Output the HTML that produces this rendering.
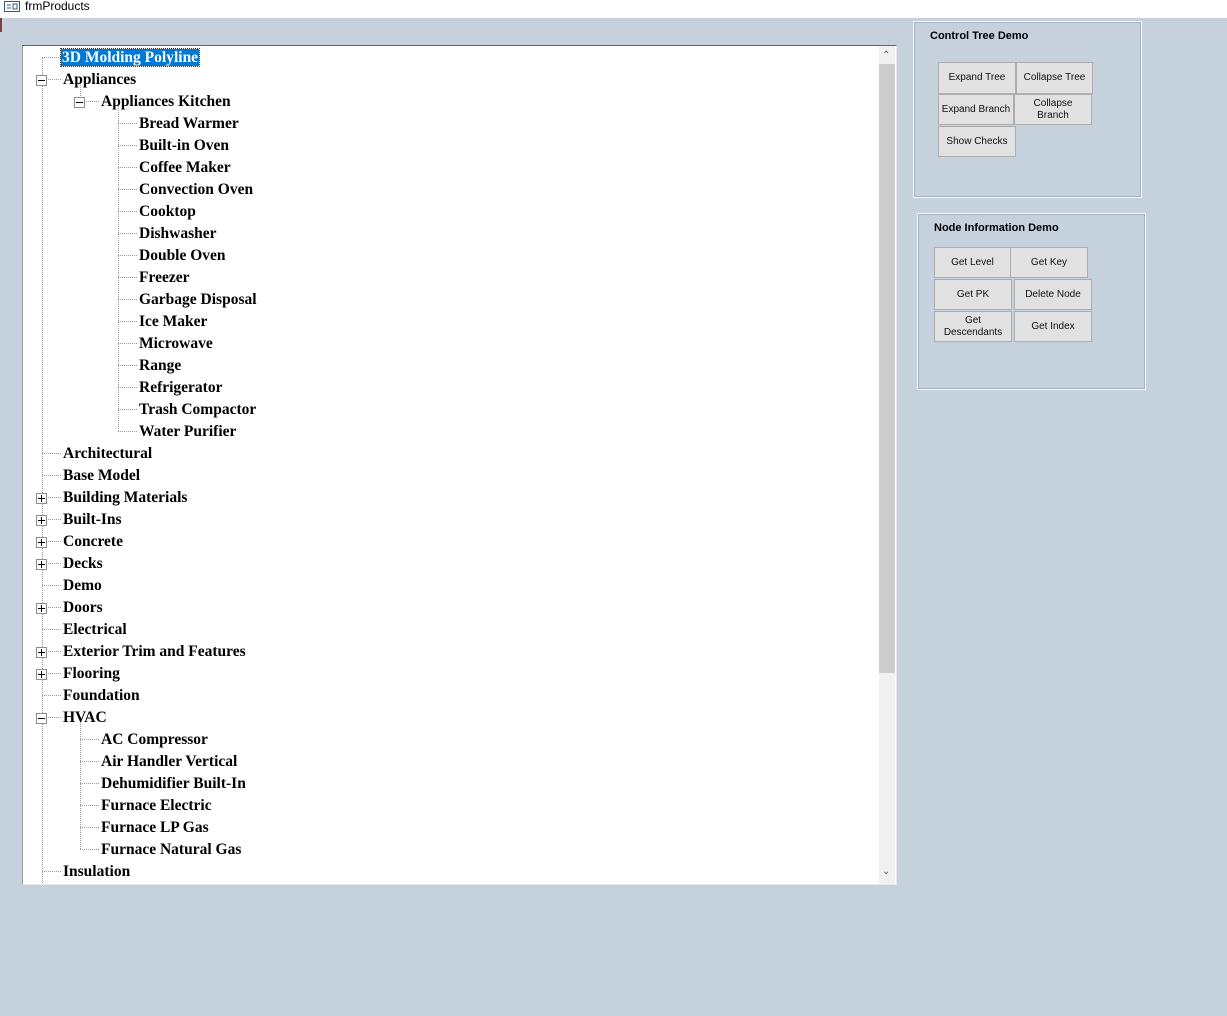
<!DOCTYPE html>
<html><head><meta charset="utf-8"><style>
body{margin:0;width:1227px;height:1016px;background:#c5d1dd;position:relative;overflow:hidden;font-family:"Liberation Sans",sans-serif}
.title{position:absolute;left:0;top:0;width:1227px;height:18px;background:#fff;font-size:12px;line-height:13px}
.title span{position:absolute;left:25px;top:0}
.tree{position:absolute;left:22px;top:45px;width:873px;height:838px;background:#fff;border-top:1px solid #646464;border-left:1px solid #a0a0a0;border-right:1px solid #e8e8e8;border-bottom:1px solid #e8e8e8;overflow:hidden}
.sb{position:absolute;left:879px;top:46px;width:16px;height:838px;background:#f0f0f0}
.th{position:absolute;left:879px;top:64px;width:16px;height:609px;background:#cdcdcd}
.r{position:absolute;height:22px;line-height:22px;font:bold 15.5px "Liberation Serif",serif;color:#000;white-space:nowrap;margin-top:2px}
.v{position:absolute;width:0;border-left:1px dotted #9a9a9a}
.h{position:absolute;height:0;border-top:1px dotted #9a9a9a}
.b{position:absolute;width:9px;height:9px;border:1px solid #8e8e8e;background:#fff}
.b:before{content:"";position:absolute;left:1px;top:4px;width:7px;height:1px;background:#000}
.p:after{content:"";position:absolute;left:4px;top:1px;width:1px;height:7px;background:#000}
.sel{background:#0078d7;color:#fff;padding:0 1px;outline:1px dotted #333}
.fr{position:absolute;border:1px solid #f4f6f8;box-shadow:inset 0 0 0 1px #a9b3bd}
.ft{position:absolute;font:bold 11px "Liberation Sans",sans-serif;color:#000}
.btn{position:absolute;background:#e1e1e1;border:1px solid #adadad;box-sizing:border-box;font:10px "Liberation Sans",sans-serif;display:flex;align-items:center;justify-content:center;text-align:center;line-height:12px;color:#111;white-space:nowrap}
</style></head><body>
<div style="position:absolute;left:0;top:18px;width:2px;height:14px;background:#8a3a3a"></div>
<div class="title"><svg style="position:absolute;left:4px;top:1px" width="16" height="11"><rect x="0.5" y="0.5" width="15" height="10" fill="#fff" stroke="#3a5a8a"/><line x1="3" y1="4" x2="7" y2="4" stroke="#3a5a8a"/><line x1="3" y1="7" x2="7" y2="7" stroke="#3a5a8a"/><rect x="9" y="3" width="4" height="5" fill="none" stroke="#3a5a8a"/></svg><span>frmProducts</span></div>
<div class="tree"></div>
<div class="sb"></div><div class="th"></div>
<div style="position:absolute;left:882px;top:50px;font-size:10px;color:#555">&#8963;</div>
<div style="position:absolute;left:882px;top:866px;font-size:10px;color:#555">&#8964;</div>

<div class="v" style="left:42px;top:57px;height:826px"></div>
<div class="v" style="left:80px;top:80px;height:22px"></div>
<div class="v" style="left:118px;top:102px;height:329px"></div>
<div class="v" style="left:80px;top:717px;height:132px"></div>

<div class="h" style="left:42px;top:57px;width:19px"></div>
<div class="h" style="left:42px;top:79px;width:19px"></div>
<div class="h" style="left:42px;top:453px;width:19px"></div>
<div class="h" style="left:42px;top:475px;width:19px"></div>
<div class="h" style="left:42px;top:497px;width:19px"></div>
<div class="h" style="left:42px;top:519px;width:19px"></div>
<div class="h" style="left:42px;top:541px;width:19px"></div>
<div class="h" style="left:42px;top:563px;width:19px"></div>
<div class="h" style="left:42px;top:585px;width:19px"></div>
<div class="h" style="left:42px;top:607px;width:19px"></div>
<div class="h" style="left:42px;top:629px;width:19px"></div>
<div class="h" style="left:42px;top:651px;width:19px"></div>
<div class="h" style="left:42px;top:673px;width:19px"></div>
<div class="h" style="left:42px;top:695px;width:19px"></div>
<div class="h" style="left:42px;top:717px;width:19px"></div>
<div class="h" style="left:42px;top:871px;width:19px"></div>
<div class="h" style="left:80px;top:101px;width:19px"></div>
<div class="h" style="left:80px;top:739px;width:19px"></div>
<div class="h" style="left:80px;top:761px;width:19px"></div>
<div class="h" style="left:80px;top:783px;width:19px"></div>
<div class="h" style="left:80px;top:805px;width:19px"></div>
<div class="h" style="left:80px;top:827px;width:19px"></div>
<div class="h" style="left:80px;top:849px;width:19px"></div>
<div class="h" style="left:118px;top:123px;width:19px"></div>
<div class="h" style="left:118px;top:145px;width:19px"></div>
<div class="h" style="left:118px;top:167px;width:19px"></div>
<div class="h" style="left:118px;top:189px;width:19px"></div>
<div class="h" style="left:118px;top:211px;width:19px"></div>
<div class="h" style="left:118px;top:233px;width:19px"></div>
<div class="h" style="left:118px;top:255px;width:19px"></div>
<div class="h" style="left:118px;top:277px;width:19px"></div>
<div class="h" style="left:118px;top:299px;width:19px"></div>
<div class="h" style="left:118px;top:321px;width:19px"></div>
<div class="h" style="left:118px;top:343px;width:19px"></div>
<div class="h" style="left:118px;top:365px;width:19px"></div>
<div class="h" style="left:118px;top:387px;width:19px"></div>
<div class="h" style="left:118px;top:409px;width:19px"></div>
<div class="h" style="left:118px;top:431px;width:19px"></div>

<div class="b" style="left:36px;top:75px"></div>
<div class="b" style="left:74px;top:97px"></div>
<div class="b p" style="left:36px;top:493px"></div>
<div class="b p" style="left:36px;top:515px"></div>
<div class="b p" style="left:36px;top:537px"></div>
<div class="b p" style="left:36px;top:559px"></div>
<div class="b p" style="left:36px;top:603px"></div>
<div class="b p" style="left:36px;top:647px"></div>
<div class="b p" style="left:36px;top:669px"></div>
<div class="b" style="left:36px;top:713px"></div>

<div class="r" style="left:61px;top:46px;height:20px;line-height:20px"><span class="sel">3D Molding Polyline</span></div>
<div class="r" style="left:63px;top:69px">Appliances</div>
<div class="r" style="left:101px;top:91px">Appliances Kitchen</div>
<div class="r" style="left:139px;top:113px">Bread Warmer</div>
<div class="r" style="left:139px;top:135px">Built-in Oven</div>
<div class="r" style="left:139px;top:157px">Coffee Maker</div>
<div class="r" style="left:139px;top:179px">Convection Oven</div>
<div class="r" style="left:139px;top:201px">Cooktop</div>
<div class="r" style="left:139px;top:223px">Dishwasher</div>
<div class="r" style="left:139px;top:245px">Double Oven</div>
<div class="r" style="left:139px;top:267px">Freezer</div>
<div class="r" style="left:139px;top:289px">Garbage Disposal</div>
<div class="r" style="left:139px;top:311px">Ice Maker</div>
<div class="r" style="left:139px;top:333px">Microwave</div>
<div class="r" style="left:139px;top:355px">Range</div>
<div class="r" style="left:139px;top:377px">Refrigerator</div>
<div class="r" style="left:139px;top:399px">Trash Compactor</div>
<div class="r" style="left:139px;top:421px">Water Purifier</div>
<div class="r" style="left:63px;top:443px">Architectural</div>
<div class="r" style="left:63px;top:465px">Base Model</div>
<div class="r" style="left:63px;top:487px">Building Materials</div>
<div class="r" style="left:63px;top:509px">Built-Ins</div>
<div class="r" style="left:63px;top:531px">Concrete</div>
<div class="r" style="left:63px;top:553px">Decks</div>
<div class="r" style="left:63px;top:575px">Demo</div>
<div class="r" style="left:63px;top:597px">Doors</div>
<div class="r" style="left:63px;top:619px">Electrical</div>
<div class="r" style="left:63px;top:641px">Exterior Trim and Features</div>
<div class="r" style="left:63px;top:663px">Flooring</div>
<div class="r" style="left:63px;top:685px">Foundation</div>
<div class="r" style="left:63px;top:707px">HVAC</div>
<div class="r" style="left:101px;top:729px">AC Compressor</div>
<div class="r" style="left:101px;top:751px">Air Handler Vertical</div>
<div class="r" style="left:101px;top:773px">Dehumidifier Built-In</div>
<div class="r" style="left:101px;top:795px">Furnace Electric</div>
<div class="r" style="left:101px;top:817px">Furnace LP Gas</div>
<div class="r" style="left:101px;top:839px">Furnace Natural Gas</div>
<div class="r" style="left:63px;top:861px">Insulation</div>

<div class="fr" style="left:913px;top:21px;width:227px;height:175px"></div>
<div class="ft" style="left:930px;top:30px">Control Tree Demo</div>
<div class="btn" style="left:938px;top:62px;width:78px;height:32px">Expand Tree</div>
<div class="btn" style="left:1016px;top:62px;width:77px;height:32px">Collapse Tree</div>
<div class="btn" style="left:938px;top:94px;width:76px;height:31px">Expand Branch</div>
<div class="btn" style="left:1014px;top:94px;width:78px;height:31px">Collapse<br>Branch</div>
<div class="btn" style="left:938px;top:126px;width:78px;height:31px">Show Checks</div>

<div class="fr" style="left:917px;top:213px;width:227px;height:175px"></div>
<div class="ft" style="left:934px;top:222px">Node Information Demo</div>
<div class="btn" style="left:934px;top:247px;width:77px;height:31px">Get Level</div>
<div class="btn" style="left:1010px;top:247px;width:78px;height:31px">Get Key</div>
<div class="btn" style="left:934px;top:279px;width:78px;height:31px">Get PK</div>
<div class="btn" style="left:1014px;top:279px;width:78px;height:31px">Delete Node</div>
<div class="btn" style="left:934px;top:311px;width:78px;height:31px">Get<br>Descendants</div>
<div class="btn" style="left:1014px;top:311px;width:78px;height:31px">Get Index</div>
</body></html>
